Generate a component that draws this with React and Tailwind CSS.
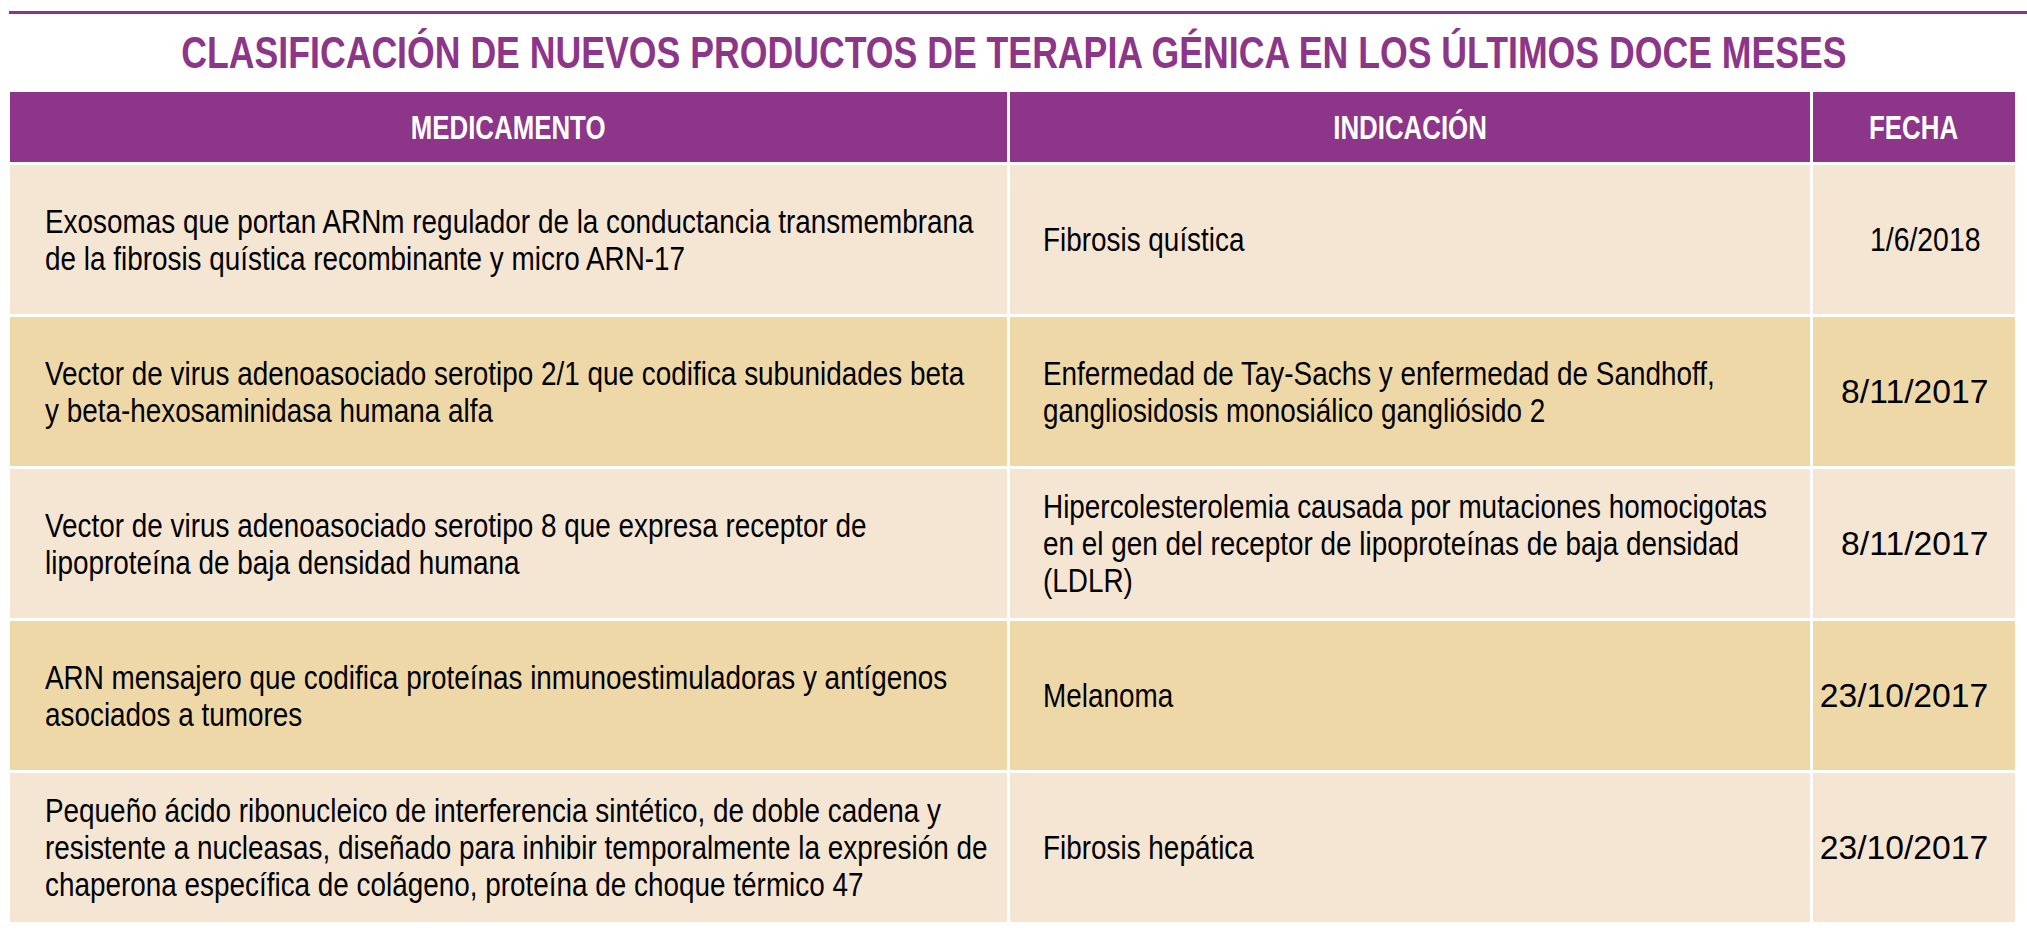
import React from "react";

const rows = [
  {
    med: [
      "Exosomas que portan ARNm regulador de la conductancia transmembrana",
      "de la fibrosis quística recombinante y micro ARN-17",
    ],
    ind: ["Fibrosis quística"],
    date: "1/6/2018",
    dateCls: "scale-x-[0.86] mr-[8px]",
    dark: false,
  },
  {
    med: [
      "Vector de virus adenoasociado serotipo 2/1 que codifica subunidades beta",
      "y beta-hexosaminidasa humana alfa",
    ],
    ind: [
      "Enfermedad de Tay-Sachs y enfermedad de Sandhoff,",
      "gangliosidosis monosiálico gangliósido 2",
    ],
    date: "8/11/2017",
    dateCls: "scale-x-[1.02]",
    dark: true,
  },
  {
    med: [
      "Vector de virus adenoasociado serotipo 8 que expresa receptor de",
      "lipoproteína de baja densidad humana",
    ],
    ind: [
      "Hipercolesterolemia causada por mutaciones homocigotas",
      "en el gen del receptor de lipoproteínas de baja densidad",
      "(LDLR)",
    ],
    date: "8/11/2017",
    dateCls: "scale-x-[1.02]",
    dark: false,
  },
  {
    med: [
      "ARN mensajero que codifica proteínas inmunoestimuladoras y antígenos",
      "asociados a tumores",
    ],
    ind: ["Melanoma"],
    date: "23/10/2017",
    dateCls: "scale-x-[1.02]",
    dark: true,
  },
  {
    med: [
      "Pequeño ácido ribonucleico de interferencia sintético, de doble cadena y",
      "resistente a nucleasas, diseñado para inhibir temporalmente la expresión de",
      "chaperona específica de colágeno, proteína de choque térmico 47",
    ],
    ind: ["Fibrosis hepática"],
    date: "23/10/2017",
    dateCls: "scale-x-[1.02]",
    dark: false,
  },
];

// condensed face isn't installed, so narrow Liberation Sans horizontally
const Lines = ({ lines }) => (
  <div className="origin-left scale-x-[0.845]">
    {lines.map((l, i) => (
      <div key={i} className="whitespace-nowrap">
        {l}
      </div>
    ))}
  </div>
);

const Head = ({ children }) => (
  <div className="h-[70px] bg-[#8c3589] flex items-center justify-center overflow-hidden">
    <span className="text-white font-bold text-[34px] leading-none scale-x-[0.76] whitespace-nowrap">{children}</span>
  </div>
);

export default function App() {
  return (
    <div className="w-[2027px] h-[933px] bg-white overflow-hidden font-['Liberation_Sans',Arial,sans-serif] text-black">
      {/* rule */}
      <div className="pt-[11px] pl-[9px]">
        <div className="h-[3px] bg-[#8c3589]" />
      </div>

      {/* title */}
      <div className="h-[78px] flex items-center justify-center">
        <h1 className="text-[44px] leading-none font-bold uppercase text-[#8c3589] scale-x-[0.81] whitespace-nowrap">
          Clasificación de nuevos productos de terapia génica en los últimos doce meses
        </h1>
      </div>

      {/* table */}
      <div className="ml-[10px] w-[2005px] grid grid-cols-[997px_800px_202px] gap-[3px]">
        <Head>MEDICAMENTO</Head>
        <Head>INDICACIÓN</Head>
        <Head>FECHA</Head>

        {rows.map((r, i) => {
          const bg = r.dark ? "bg-[#eed8a8]" : "bg-[#f5e6d4]";
          return (
            <React.Fragment key={i}>
              <div className={`h-[149px] ${bg} flex items-center pl-[35px] text-[33px] leading-[37px]`}>
                <Lines lines={r.med} />
              </div>
              <div className={`h-[149px] ${bg} flex items-center pl-[33px] text-[33px] leading-[37px]`}>
                <Lines lines={r.ind} />
              </div>
              <div className={`h-[149px] ${bg} flex items-center justify-end pr-[27px] text-[33px] leading-[37px]`}>
                <div className={`origin-right whitespace-nowrap ${r.dateCls}`}>{r.date}</div>
              </div>
            </React.Fragment>
          );
        })}
      </div>
    </div>
  );
}
